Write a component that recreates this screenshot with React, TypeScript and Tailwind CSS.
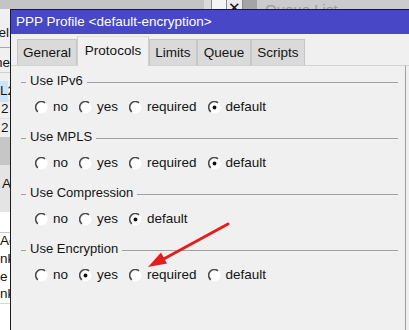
type Opt = { label: string; checked?: boolean }

function Radio({ label, checked }: Opt) {
  return (
    <div className="flex items-center">
      <svg width="13" height="13" viewBox="0 0 13 13" className="shrink-0">
        <circle cx="6.5" cy="6.5" r="6" fill="#ffffff" />
        <path d="M10 1.8 A5.7 5.7 0 0 0 2.8 10.8" fill="none" stroke="#4a4a4a" strokeWidth="1.6" />
        {checked && <circle cx="6.5" cy="6.5" r="1.9" fill="#111111" />}
      </svg>
      <span className="ml-[5px]">{label}</span>
    </div>
  )
}

function Group({ title, options }: { title: string; options: Opt[] }) {
  return (
    <div className="h-[56px]">
      <div className="flex h-[18px] items-center">
        <div className="ml-[10px] mt-[3px] h-px w-[5px] bg-[#a0a0a0]" />
        <span className="ml-[4px] text-[13px]">{title}</span>
        <div className="ml-[4px] mr-[7px] mt-[3px] h-px flex-1 bg-[#a0a0a0]" />
      </div>
      <div className="mt-[8px] flex h-[18px] items-center gap-[11px] pl-[24px] text-[13.5px]">
        {options.map((o) => (
          <Radio key={o.label} {...o} />
        ))}
      </div>
    </div>
  )
}

const tabs = [
  { name: 'General', w: 'w-[60px]' },
  { name: 'Protocols', w: 'w-[72px]', active: true },
  { name: 'Limits', w: 'w-[48px]' },
  { name: 'Queue', w: 'w-[54px]' },
  { name: 'Scripts', w: 'w-[54px]' },
]

// right-hand ends of the texts of the window that lies behind the dialog
function Cut({ text, className = '' }: { text: string; className?: string }) {
  return (
    <div className={`flex h-[18px] items-center justify-end overflow-hidden whitespace-nowrap ${className}`}>{text}</div>
  )
}

export default function App() {
  return (
    <div className="relative h-[330px] w-[409px] overflow-hidden bg-[#c4c4c4] font-['Liberation_Sans',Arial,sans-serif] text-[#141414]">
      {/* window behind, left edge */}
      <div className="absolute left-0 top-[9px] flex h-[321px] w-[10px] flex-col overflow-hidden bg-[#f0f0f0] text-[13.5px]">
        <div className="h-[15px]" />
        <Cut text="Cancel" className="w-[9px]" />
        <div className="mt-[5px] h-px bg-[#a8a8a8]" />
        <Cut text="Name" className="mt-[6px]" />
        <div className="h-px bg-[#d0d0d0]" />
        <div className="mt-[10px] flex h-[18px] items-center border-b border-[#e0e0e0] whitespace-nowrap">
          <span className="bg-[#cde4f7]">L</span>2
        </div>
        <div className="flex h-[18px] items-center border-b border-[#e0e0e0] pl-[1px]">2</div>
        <div className="flex h-[18px] items-center pl-[1px]">2</div>
        <div className="h-[28px] bg-[#c6c6c6]" />
        <div className="flex h-[47px] items-start bg-[#e4e4e4] pl-[2px] pt-[9px]">A</div>
        <div className="flex flex-1 flex-col bg-white pt-[20px]">
          <div className="flex h-[18px] items-center border-t border-[#c8c8c8] whitespace-nowrap">Ac</div>
          <div className="flex h-[18px] items-center whitespace-nowrap">nk</div>
          <div className="flex h-[18px] items-center whitespace-nowrap">e</div>
          <div className="flex h-[18px] items-center border-b border-[#d8d8d8] whitespace-nowrap">nk</div>
        </div>
      </div>

      {/* window behind, top strip */}
      <div className="absolute left-[204px] top-0 flex h-[9px] w-[205px]">
        <div className="w-[7px] bg-[#dadada]" />
        <div className="w-[16px] border-x border-[#8a8a8a] bg-[#f4f4f4]" />
        <div className="flex w-[16px] items-end justify-center overflow-hidden border-r border-[#8a8a8a] bg-[#ececec] text-[15px] leading-[15px]">
          <span className="translate-y-[6px]">✕</span>
        </div>
        <div className="w-[14px] bg-[#a4a4a4]" />
        <div className="flex flex-1 items-start overflow-hidden bg-[#cbcbcb] pl-[8px] pt-[1px] text-[15px] leading-[18px] text-[#9a9a9a] whitespace-nowrap">
          Queue List
        </div>
      </div>

      {/* dialog */}
      <div className="absolute left-[10px] top-[9px] flex h-[330px] w-[420px] flex-col border-l border-t border-[#1c1c1c] bg-[#f0f0f0]">
        <div className="flex h-[24px] shrink-0 items-center bg-[#4848c6] pl-[5px] text-[13.5px] text-white">
          PPP Profile &lt;default-encryption&gt;
        </div>
        <div className="flex h-[31px] shrink-0 items-end pl-[6px] text-[13.5px]">
          {tabs.map((t) =>
            t.active ? (
              <div
                key={t.name}
                className={`${t.w} relative z-10 -mb-px flex h-[30px] items-center justify-center border-x border-t border-x-[#d0d0d0] border-t-[#e0e0e0] bg-[#f0f0f0]`}
              >
                {t.name}
              </div>
            ) : (
              <div
                key={t.name}
                className={`${t.w} flex h-[26px] items-center justify-center border-x border-t border-[#c6c6c6] bg-[#dadada] pt-[1px]`}
              >
                {t.name}
              </div>
            ),
          )}
        </div>
        <div className="flex-1 border-t border-[#d2d2d2]">
          <div className="h-full w-[395px] border-r border-[#a0a0a0] pt-[6px]">
            <Group
              title="Use IPv6"
              options={[{ label: 'no' }, { label: 'yes' }, { label: 'required' }, { label: 'default', checked: true }]}
            />
            <Group
              title="Use MPLS"
              options={[{ label: 'no' }, { label: 'yes' }, { label: 'required' }, { label: 'default', checked: true }]}
            />
            <Group
              title="Use Compression"
              options={[{ label: 'no' }, { label: 'yes' }, { label: 'default', checked: true }]}
            />
            <Group
              title="Use Encryption"
              options={[{ label: 'no' }, { label: 'yes', checked: true }, { label: 'required' }, { label: 'default' }]}
            />
          </div>
        </div>
      </div>

      {/* red arrow */}
      <svg className="pointer-events-none absolute left-0 top-0" width="409" height="330" viewBox="0 0 409 330">
        <line x1="228" y1="224" x2="160" y2="261" stroke="#e41d1d" strokeWidth="3" strokeLinecap="round" />
        <polygon points="148,267 167,263.5 161,252.5" fill="#e41d1d" />
      </svg>
    </div>
  )
}
